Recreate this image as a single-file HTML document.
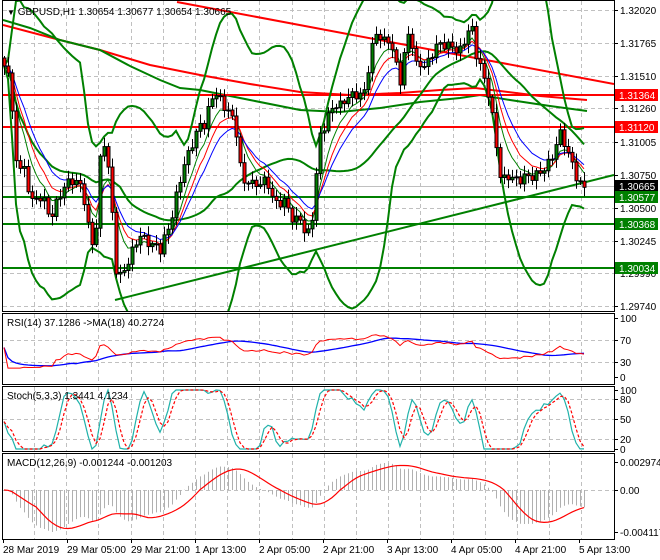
<!DOCTYPE html>
<html><head><meta charset="utf-8"><style>
html,body{margin:0;padding:0;background:#fff;width:660px;height:560px;overflow:hidden}
svg{display:block;font-family:"Liberation Sans",sans-serif;font-size:10px}
</style></head><body>
<svg id="s" width="660" height="560" xmlns="http://www.w3.org/2000/svg">
<defs>
<clipPath id="cm"><rect x="3" y="1" width="611" height="310"/></clipPath>
<clipPath id="cr"><rect x="3" y="314" width="611" height="70"/></clipPath>
<clipPath id="cs"><rect x="3" y="387" width="611" height="64"/></clipPath>
<clipPath id="cd"><rect x="3" y="454" width="611" height="85"/></clipPath>
</defs>
<g id="grid" stroke="#c0c0c0" stroke-dasharray="4,3" stroke-width="1"></g>
<g clip-path="url(#cm)">
<line x1="3" y1="186.5" x2="614" y2="186.5" stroke="#c0c0c0"/>
<polyline fill="none" stroke="#ff0000" stroke-width="2" points="3,25 60,40 100,50 150,65 200,75 250,84 300,92 350,95 400,93 440,90 475,88 500,91 540,96 587,100"/>
<polyline fill="none" stroke="#008000" stroke-width="2" points="3,20 30,28 60,40 100,50 130,66 160,80 180,88 200,90 250,100 300,110 340,112 380,108 420,102 460,98 480,95 510,100 550,106 587,111"/>
<line x1="177" y1="2" x2="614" y2="84" stroke="#ff0000" stroke-width="2"/>
<line x1="115" y1="300" x2="614" y2="175" stroke="#008000" stroke-width="2"/>
<line x1="3" y1="95" x2="614" y2="95" stroke="#ff0000" stroke-width="2"/>
<line x1="3" y1="127" x2="614" y2="127" stroke="#ff0000" stroke-width="2"/>
<line x1="3" y1="197" x2="614" y2="197" stroke="#008000" stroke-width="2"/>
<line x1="3" y1="224" x2="614" y2="224" stroke="#008000" stroke-width="2"/>
<line x1="3" y1="268" x2="614" y2="268" stroke="#008000" stroke-width="2"/>
<g id="bb"></g><g id="ma"></g><g id="cd2"></g>
</g>
<g clip-path="url(#cr)" id="rsi"></g>
<g clip-path="url(#cs)" id="sto"></g>
<g clip-path="url(#cd)" id="macd"></g>
<g fill="none" stroke="#000" stroke-width="1">
<rect x="2.5" y="0.5" width="612" height="311"/>
<rect x="2.5" y="313.5" width="612" height="71"/>
<rect x="2.5" y="386.5" width="612" height="65"/>
<rect x="2.5" y="453.5" width="612" height="86"/>
</g>
<text x="7" y="15"><tspan font-size="8">▼</tspan> GBPUSD,H1  1.30654 1.30677 1.30654 1.30665</text>
<text x="7" y="326">RSI(14) 37.1286  -&gt;MA(18) 40.2724</text>
<text x="7" y="399">Stoch(5,3,3) 1.3441 4.1234</text>
<text x="7" y="466">MACD(12,26,9) -0.001244 -0.001203</text>
<g id="axis"></g>
</svg>
<script>
var NS="http://www.w3.org/2000/svg";
function el(p,t,a,txt){var e=document.createElementNS(NS,t);for(var k in a)e.setAttribute(k,a[k]);if(txt!=null)e.textContent=txt;document.getElementById(p).appendChild(e);return e;}
for(var x=34;x<614;x+=32.2){el("grid","line",{x1:Math.round(x)+.5,y1:1,x2:Math.round(x)+.5,y2:311});el("grid","line",{x1:Math.round(x)+.5,y1:314,x2:Math.round(x)+.5,y2:384});el("grid","line",{x1:Math.round(x)+.5,y1:387,x2:Math.round(x)+.5,y2:451});el("grid","line",{x1:Math.round(x)+.5,y1:454,x2:Math.round(x)+.5,y2:539});}
[10,43,76,108,142,175,208,241,273,306].forEach(function(y){el("grid","line",{x1:3,y1:y+.5,x2:614,y2:y+.5});});
[340,362].forEach(function(y){el("grid","line",{x1:3,y1:y+.5,x2:614,y2:y+.5});});
[399,419,439].forEach(function(y){el("grid","line",{x1:3,y1:y+.5,x2:614,y2:y+.5});});
[490].forEach(function(y){el("grid","line",{x1:3,y1:y+.5,x2:614,y2:y+.5});});
var P=[[3,65],[8,70],[12,115],[15,150],[18,175],[22,160],[27,185],[32,200],[37,200],[42,195],[47,210],[50,220],[55,205],[60,195],[65,185],[70,180],[75,182],[80,185],[85,205],[90,240],[93,245],[97,220],[100,160],[103,140],[106,150],[110,185],[113,230],[116,270],[120,275],[125,270],[130,255],[135,245],[140,235],[145,240],[150,245],[155,245],[160,250],[165,235],[170,225],[175,200],[180,180],[185,160],[190,150],[195,135],[200,125],[205,125],[210,100],[215,95],[218,90],[222,110],[226,105],[230,115],[235,125],[240,165],[243,185],[248,180],[253,185],[258,185],[263,180],[268,185],[273,200],[278,205],[283,200],[287,205],[290,215],[295,225],[298,210],[303,230],[306,235],[310,230],[313,210],[316,175],[320,135],[325,125],[330,110],[335,105],[340,105],[345,100],[350,95],[355,95],[360,95],[365,90],[370,55],[375,35],[378,30],[382,45],[387,35],[390,50],[395,50],[398,95],[403,60],[408,35],[412,45],[416,65],[420,65],[425,65],[430,60],[435,45],[440,45],[445,45],[450,45],[455,50],[460,50],[465,40],[468,30],[472,30],[476,55],[480,65],[484,80],[487,90],[490,100],[495,140],[500,175],[505,180],[510,175],[515,180],[520,180],[525,175],[530,178],[535,175],[540,172],[545,168],[550,160],[555,150],[558,135],[562,130],[566,155],[570,155],[574,170],[578,185],[582,185],[587,186]];
function ip(x){for(var i=1;i<P.length;i++){if(x<=P[i][0]){var a=P[i-1],b=P[i];return a[1]+(b[1]-a[1])*(x-a[0])/(b[0]-a[0]);}}return P[P.length-1][1];}
var X=[],C=[],O=[],H=[],L=[];
for(var x=4,i=0;x<=587;x+=4,i++){X.push(x);var c=ip(x)+Math.sin(i*2.3)*4;C.push(c);O.push(i?C[i-1]:58);var w1=2+Math.abs(Math.sin(i*1.7))*7,w2=2+Math.abs(Math.cos(i*1.3))*7;H.push(Math.min(O[i],c)-w1);L.push(Math.max(O[i],c)+w2);}
var n=C.length;
function ema(a,p){var k=2/(p+1),r=[a[0]];for(var i=1;i<a.length;i++)r.push(r[i-1]+k*(a[i]-r[i-1]));return r;}
function sma(a,p){var r=[];for(var i=0;i<a.length;i++){var s=0,c=0;for(var j=Math.max(0,i-p+1);j<=i;j++){s+=a[j];c++;}r.push(s/c);}return r;}
function pl(g,xs,ys,st,w,da){var s="";for(var i=0;i<xs.length;i++)s+=xs[i].toFixed(1)+","+ys[i].toFixed(1)+" ";var a={points:s,fill:"none",stroke:st,"stroke-width":w};if(da)a["stroke-dasharray"]=da;el(g,"polyline",a);}
var m=sma(C,20),up=[],dn=[];for(var i=0;i<n;i++){var s=0,c=0;for(var j=Math.max(0,i-19);j<=i;j++){s+=(C[j]-m[i])*(C[j]-m[i]);c++;}var sd=Math.sqrt(s/c);up.push(m[i]-2.7*sd);dn.push(m[i]+2.7*sd);}
pl("bb",X,up,"#008000",2);pl("bb",X,dn,"#008000",2);pl("bb",X,sma(C,30),"#008000",2);
pl("ma",X,ema(C,6),"#008000",1);pl("ma",X,ema(C,9),"#ff0000",1);pl("ma",X,ema(C,13),"#0000ff",1);
for(var i=0;i<n;i++){var x=X[i];el("cd2","line",{x1:x+.5,y1:H[i],x2:x+.5,y2:L[i],stroke:"#000"});var t=Math.min(O[i],C[i]),b=Math.max(O[i],C[i]);el("cd2","rect",{x:x-1,y:t,width:3,height:Math.max(1,b-t),fill:C[i]<O[i]?"#008000":"#ff0000",stroke:"#000","stroke-width":1});}
var pr=C.map(function(v){return -v});var ag=0,al=0,R=[50];for(var i=1;i<n;i++){var d=pr[i]-pr[i-1];var g=d>0?d:0,l=d<0?-d:0;ag=(ag*13+g)/14;al=(al*13+l)/14;R.push(al==0?100:100-100/(1+ag/al));}
R=R.map(function(r){return 50+(r-50)*0.7});
var ry=function(v){return 377-v*0.59};
pl("rsi",X,sma(R,18).map(ry),"#0000ff",1.3);pl("rsi",X,R.map(ry),"#ff0000",1);
var K=[];for(var i=0;i<n;i++){var hh=1e9,ll=-1e9;for(var j=Math.max(0,i-4);j<=i;j++){hh=Math.min(hh,H[j]);ll=Math.max(ll,L[j]);}K.push((ll-C[i])/(ll-hh)*100);}
K=sma(K,3);K=K.map(function(v){return Math.max(0,Math.min(100,50+(v-50)*1.35))});var D=sma(K,3);var sy=function(v){return 449-v*0.59};
pl("sto",X,K.map(sy),"#20b2aa",1.2);pl("sto",X,D.map(sy),"#ff0000",1.2,"3,2");
var e12=ema(pr,12),e26=ema(pr,26),M=[];for(var i=0;i<n;i++)M.push(e12[i]-e26[i]);var S=sma(M,9);var mx=0,mn=0;M.forEach(function(v){mx=Math.max(mx,v);mn=Math.min(mn,v)});
var my=function(v){return v>=0?490-v*27/mx:490+v*(-42/mn)*(-1)};
for(var i=0;i<n;i++)el("macd","line",{x1:X[i]+.5,y1:490,x2:X[i]+.5,y2:my(M[i]),stroke:"#b0b0b0"});
pl("macd",X,S.map(my),"#ff0000",1.2);
[["1.32020",10],["1.31765",43],["1.31510",76],["1.31260",108],["1.31005",142],["1.30750",175],["1.30500",208],["1.30245",241],["1.29990",273],["1.29740",306],["100",318],["70",340],["30",362],["0",377],["100",390],["80",399],["50",419],["20",439],["0",449],["0.002974",462],["0.00",490],["-0.004117",532]].forEach(function(a){el("axis","line",{x1:614,y1:a[1]+.5,x2:618,y2:a[1]+.5,stroke:"#000"});el("axis","text",{x:620,y:a[1]+4},a[0]);});
[["1.31364",95,"#ff0000"],["1.31120",127,"#ff0000"],["1.30665",186,"#000"],["1.30577",197,"#008000"],["1.30368",224,"#008000"],["1.30034",268,"#008000"]].forEach(function(a){el("axis","rect",{x:615,y:a[1]-6,width:43,height:12,fill:a[2]});el("axis","text",{x:619,y:a[1]+4,fill:"#fff"},a[0]);});
[["28 Mar 2019",3],["29 Mar 05:00",67],["29 Mar 21:00",131],["1 Apr 13:00",195],["2 Apr 05:00",259],["2 Apr 21:00",323],["3 Apr 13:00",387],["4 Apr 05:00",451],["4 Apr 21:00",515],["5 Apr 13:00",579]].forEach(function(a){el("axis","line",{x1:a[1]+.5,y1:539,x2:a[1]+.5,y2:543,stroke:"#000"});el("axis","text",{x:a[1],y:553},a[0]);});
</script>
</body></html>
